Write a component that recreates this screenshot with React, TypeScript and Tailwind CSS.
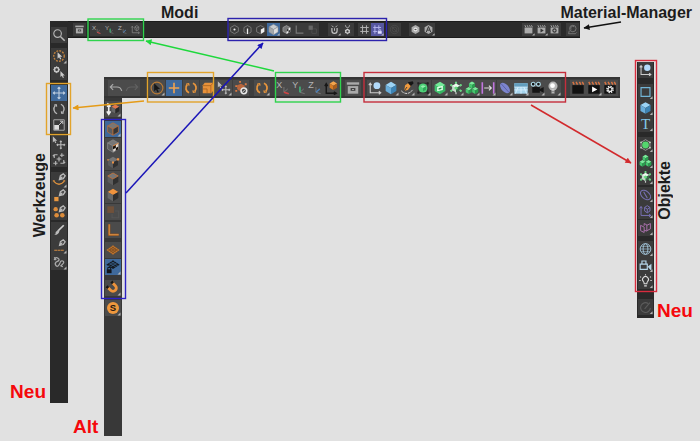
import type { ReactNode } from "react";

type CubeProps = { x?: number; y?: number; r?: number; top: string; left: string; right: string; edge?: string };

function Cube({ x = 8, y = 8, r = 6, top, left, right, edge = "none" }: CubeProps) {
  const w = r * 0.87;
  const h = r / 2;
  return (
    <g stroke={edge} strokeWidth="0.8" strokeLinejoin="round">
      <path fill={top} d={`M${x} ${y - r}L${x + w} ${y - h}L${x} ${y}L${x - w} ${y - h}Z`} />
      <path fill={left} d={`M${x - w} ${y - h}L${x} ${y}V${y + r}L${x - w} ${y + h}Z`} />
      <path fill={right} d={`M${x + w} ${y - h}L${x} ${y}V${y + r}L${x + w} ${y + h}Z`} />
    </g>
  );
}

function AxisIcon({ letter, color }: { letter: string; color: string }) {
  return (
    <g>
      <text x="1" y="8.500" fontSize="9.500" fontFamily="Liberation Sans, Arial, sans-serif" fill="#b4b4b4">
        {letter}
      </text>
      <path d="M9 7v5.500l5 1.500M9 12.500l4-3.500" stroke="#777" fill="none" />
      <path d={letter === "X" ? "M9 12.500l5 1.500" : letter === "Y" ? "M9 6.500v6" : "M9 12.500l4-3.500"} stroke={color} strokeWidth="1.500" fill="none" />
    </g>
  );
}

function Gear({ x, y, r, color, hole }: { x: number; y: number; r: number; color: string; hole: string }) {
  return (
    <g>
      <circle cx={x} cy={y} r={r} fill="none" stroke={color} strokeWidth="1.600" strokeDasharray="1.500 1" />
      <circle cx={x} cy={y} r={r * 0.65} fill={hole} stroke={color} strokeWidth="1.200" />
    </g>
  );
}

function Clapper({ body, marks, sign }: { body: string; marks: string; sign?: ReactNode }) {
  return (
    <g>
      <rect x="2" y="5" width="12" height="9" fill={body} />
      <path d="M2.500 1.500l1.500 3M6 1.500l1.500 3M9.500 1.500l1.500 3M12.500 1.500l1.500 3" stroke={marks} strokeWidth="1.500" />
      {sign}
    </g>
  );
}

const cursor = "M0 0v8.500l2-1.800 1.500 3 1.400-.7-1.500-2.900h2.800z";
const moveCross = "M8 2v12M2 8h12M6.500 3.500L8 2l1.500 1.500M6.500 12.500L8 14l1.500-1.500M3.500 6.500L2 8l1.500 1.500M12.500 6.500L14 8l-1.500 1.500";
const nib = "M8.500 7.500l1-4 3-2 2 2-2 3zM8.500 7.500l3-3";
const rotateArcs = "M6 13a5.300 5.300 0 0 1-2-8.500M10 3a5.300 5.300 0 0 1 2 8.500";
const gridLines = "M5 1.500v13M11 1.500v13M1.500 5h13M1.500 11h13";

const icons: Record<string, ReactNode> = {
  search: (
    <g fill="none" stroke="#b5b5b5">
      <circle cx="6.500" cy="6.500" r="4" strokeWidth="1.200" />
      <path d="M9.500 9.500l4.500 4.500" strokeWidth="1.600" />
    </g>
  ),
  archive: (
    <g fill="#aaa">
      <rect x="1.500" y="2" width="13" height="2.500" />
      <path d="M2.500 6h11v8h-11z" />
      <path d="M5.500 8h5v3h-5z" fill="#444" />
      <path d="M7 9h2v1H7z" />
    </g>
  ),
  x: <AxisIcon letter="X" color="#d24141" />,
  y: <AxisIcon letter="Y" color="#35ba78" />,
  z: <AxisIcon letter="Z" color="#467ebb" />,
  coordGray: (
    <g fill="none" stroke="#858585" strokeWidth="1.200">
      <path d="M3 3v10h11M1.500 5L3 3l1.500 2M12 11.500l2 1.500-2 1.500" />
      <path d="M7 4l3-2 3 2v4l-3 2-3-2zM7 4l3 2 3-2M10 6v4" />
    </g>
  ),
  points: (
    <g>
      <path d="M8 1.500l6 3.500v6l-6 3.500L2 11V5z" fill="none" stroke="#858585" strokeWidth="1.200" />
      <circle cx="8" cy="8" r="1.600" fill="#eee" />
    </g>
  ),
  edges: (
    <g>
      <path d="M6 14L2.500 12V5L8 2l5.500 3v7L10 14" fill="none" stroke="#858585" strokeWidth="1.200" />
      <path d="M8 6.500v8.500" stroke="#eee" strokeWidth="2" />
    </g>
  ),
  polys: (
    <g>
      <path d="M8 14.500l-6-3V5l6-3 5 2.500" fill="none" stroke="#858585" strokeWidth="1.200" />
      <path d="M8.500 8L14 5v6.500l-5.500 3.500z" fill="#eee" />
    </g>
  ),
  model: <Cube r={8} top="#c9cdd0" left="#a5a8aa" right="#dcdcdc" edge="#8b8f92" />,
  texture: (
    <g>
      <path d="M8 14l-5.500-3V5L8 2l5.500 3v1.500" fill="#777" stroke="#aaa" />
      <path d="M8 8l6-3v7l-6 3z" fill="#eee" />
      <path d="M8 8l3-1.500V10l-3 1.500zM11 10l3-1.500V12l-3 1.500z" fill="#333" />
    </g>
  ),
  angle: <path d="M3 2v11.500h11" fill="none" stroke="#777" strokeWidth="1.800" />,
  squares: (
    <g>
      <path d="M9 7h5v7H7V9" fill="#3b3b3b" stroke="#555" />
      <path d="M2 2h6.500v6.500H2z" fill="#666" />
    </g>
  ),
  snap: (
    <g fill="none" stroke="#c4c4c4">
      <path d="M4 5.500V10a4 4 0 0 0 8 0V5.500" strokeWidth="1.800" />
      <path d="M4 2l2.500 2.500M12 2L9.500 4.500M8 6v4" strokeWidth="1.400" />
    </g>
  ),
  snapGear: (
    <g>
      <path d="M5 1v1.500a3 2.500 0 0 0 6 0V1" fill="none" stroke="#aaa" strokeWidth="1.300" />
      <circle cx="8" cy="11" r="2.700" fill="none" stroke="#ddd" strokeWidth="1.800" />
      <path d="M8 6.700v1.500M8 13.800v1.500M4 9l1.500.800M10.500 12.200L12 13M4 13l1.500-.800M10.500 9.800L12 9" stroke="#ddd" strokeWidth="1.300" />
    </g>
  ),
  grid: <path d={gridLines} stroke="#b5b5b5" strokeWidth="1.500" />,
  gridLock: (
    <g>
      <path d="M4 1.500v13M10 1.500v6M1.500 5h12M1.500 11h6" stroke="#b5b5ed" strokeWidth="1.500" />
      <path d="M8.500 10.500h6v4h-6z" fill="#dedeff" />
      <path d="M10 10.500V8.500h3v2" fill="none" stroke="#dedeff" />
    </g>
  ),
  target: (
    <g fill="none" stroke="#515151">
      <circle cx="8" cy="8" r="6.500" />
      <circle cx="8" cy="8" r="3.500" />
      <path d="M4 4l8 8" />
    </g>
  ),
  cog: (
    <g>
      <path d="M8 1l6 3.500v7L8 15l-6-3.500v-7z" fill="#aaa" />
      <circle cx="8" cy="8" r="3" fill="#eee" />
      <path d="M6.500 7h3v2h-3z" fill="#555" />
    </g>
  ),
  auto: (
    <g>
      <path d="M8 1l6 3.500v7L8 15l-6-3.500v-7z" fill="#aaa" />
      <path d="M4.500 12L8 3.500 11.500 12M6 9h4" fill="none" stroke="#333" strokeWidth="1.500" />
    </g>
  ),
  clap: <Clapper body="#aaa" marks="#aaa" />,
  clapPlay: <Clapper body="#aaa" marks="#aaa" sign={<path d="M6.500 6.500v6l5-3z" fill="#333" />} />,
  clapGear: <Clapper body="#aaa" marks="#aaa" sign={<circle cx="8" cy="9.500" r="2.500" fill="none" stroke="#333" strokeWidth="1.700" />} />,
  material: (
    <g fill="none" stroke="#8a8a8a" strokeWidth="1.100">
      <circle cx="8.500" cy="6.500" r="5" />
      <path d="M6 8a3 3 0 0 1 4.500-4M3 10l-1 4.500h10.500l2-2" />
    </g>
  ),
  select: (
    <g>
      <circle cx="8" cy="8" r="5.500" fill="none" stroke="#c3833e" strokeWidth="1.400" strokeDasharray="2 1.200" />
      <path d={cursor} transform="translate(6.500 4) scale(.8)" fill="#ccc" />
    </g>
  ),
  gearCursor: (
    <g>
      <circle cx="5.500" cy="5.500" r="2.200" fill="none" stroke="#c4c4c4" strokeWidth="1.600" />
      <path d="M5.500 2v1.200M5.500 8v1.200M2 5.500h1M8 5.500h1M3 3l1 1M7 7l1 1M3 8l1-1M7 4l1-1" stroke="#c4c4c4" />
      <path d={cursor} transform="translate(9.500 7) scale(.75)" fill="#c9c9c9" />
    </g>
  ),
  move: <path d={moveCross} fill="none" stroke="#c2d0e0" strokeWidth="1.100" />,
  rotate: (
    <g fill="none" stroke="#b9b9b9" strokeWidth="1.400">
      <path d={rotateArcs} />
      <path d="M3 4l2-.500.500 2M13 12l-2 .500-.500-2" />
    </g>
  ),
  scale: (
    <g>
      <path d="M2.500 2.500h11v11h-11z" fill="none" stroke="#aaa" />
      <path d="M3 8h5v5H3z" fill="#ddd" />
      <path d="M8 8l4-4M9 4h3v3" fill="none" stroke="#ccc" />
    </g>
  ),
  cursorMove: (
    <g>
      <path d={cursor} transform="translate(1.500 1) scale(.75)" fill="#bbb" />
      <path d={moveCross} transform="translate(4.500 4.500) scale(.68)" fill="none" stroke="#bbb" strokeWidth="1.600" />
    </g>
  ),
  multiMove: (
    <g fill="none" stroke="#b5b5b5" strokeWidth="1.200">
      <path d="M8 5.500v5M5.500 8h5" />
      <path d="M3 7V3.500h3.500M1.500 5L3 3.500M13 9v3.500H9.500M14.500 11L13 12.500" />
      <path d="M11 2v4M9 4h4.500M4.500 10v4.500M2 12.500h4.500" />
    </g>
  ),
  penCurve: (
    <g fill="none" strokeWidth="1.400">
      <path d={nib} stroke="#b9b9b9" />
      <path d="M2.500 9.500q5.500 6 11 0" stroke="#df923e" />
      <path d="M1.500 9h2M12.500 9h2" stroke="#df923e" />
    </g>
  ),
  penSquare: (
    <g>
      <path d={nib} fill="none" stroke="#b9b9b9" strokeWidth="1.400" />
      <path d="M3 9h4.500v4.500H3z" fill="#e89740" />
    </g>
  ),
  penDots: (
    <g>
      <path d={nib} fill="none" stroke="#b9b9b9" strokeWidth="1.400" />
      <g fill="#dc8c3b">
        <circle cx="4.500" cy="5" r="2.300" />
        <circle cx="5.500" cy="11.500" r="2.400" />
        <circle cx="11.500" cy="11.500" r="2.400" />
      </g>
    </g>
  ),
  brush: (
    <g>
      <path d="M13 3L7 9" stroke="#ccc" strokeWidth="1.800" />
      <path d="M7 8l1.500 1.500Q7 13.500 3 13q2-1 1.500-3z" fill="#bbb" />
    </g>
  ),
  penLine: (
    <g>
      <path d={nib} fill="none" stroke="#b9b9b9" strokeWidth="1.300" />
      <path d="M3 12.500h10" stroke="#d58c40" strokeWidth="1.200" strokeDasharray="3 .5" />
    </g>
  ),
  squiggle: <path d="M3 6q1-4 4-2t-2 4q-2 2 0 4t4-3q1-3 3-2t0 3-2 2 2 1M3 3l2 3" fill="none" stroke="#aaa" strokeWidth="1.300" />,
  undo: <path d="M5 4L2 7l3 3M2 7h7q4 0 5 4" fill="none" stroke="#aaa" strokeWidth="1.200" />,
  redo: <path d="M11 4l3 3-3 3M14 7H7q-4 0-5 4" fill="none" stroke="#626262" strokeWidth="1.200" />,
  selectOld: (
    <g>
      <circle cx="8" cy="8" r="6.200" fill="none" stroke="#b97b36" strokeWidth="1.200" />
      <path d={cursor} transform="translate(5 3)" fill="#161616" />
    </g>
  ),
  moveOld: <path d="M8 2.500v11M2.500 8h11" stroke="#f0a24d" strokeWidth="1.700" />,
  rotateOld: (
    <g fill="none" stroke="#e8953c" strokeWidth="1.900">
      <path d={rotateArcs} />
      <path d="M3 4l2.500-.500.500 2M13 12l-2.500.500-.500-2" strokeWidth="1.300" />
    </g>
  ),
  scaleOld: (
    <g>
      <path d="M2.500 5l2-2.500h9V11l-2 2.500h-9z" fill="#e8913a" />
      <path d="M2.500 5.500h8.500v8M11 5.500l2.500-3M2.500 9H7v4.500" fill="none" stroke="#a35f1f" strokeWidth=".8" />
    </g>
  ),
  objGear: (
    <g>
      <path d="M4 5l4-1.500 4 2-1 4-5 1.500-2-2z" fill="#b9663d" />
      <path d="M2 6h2M6 1.500h2M12 4h2M2 11h2" stroke="#da7942" strokeWidth="2" />
      <circle cx="11" cy="11" r="3" fill="#444" stroke="#e8e8e8" strokeWidth="1.700" />
      <path d="M9.500 12.500l3-3" stroke="#e8e8e8" />
    </g>
  ),
  axisCube: (
    <g>
      <path d="M3 4v9.500h10M1.500 6L3 3.500 4.500 6M11 12l2.500 1.500L11 15" fill="none" stroke="#171717" strokeWidth="1.500" />
      <Cube x={10.500} y={5.500} r={4.500} top="#f3a44c" left="#d77c24" right="#a95d1a" />
    </g>
  ),
  axisBall: (
    <g>
      <path d="M3 3v10h11M1.500 5L3 3l1.500 2M12 11.500l2 1.500-2 1.500" fill="none" stroke="#ccc" strokeWidth="1.200" />
      <circle cx="10" cy="5.500" r="3.600" fill="#b3dafa" />
    </g>
  ),
  blueCube: <Cube r={6.500} top="#9bd3f5" left="#6aaedb" right="#3d84b5" />,
  penOrange: (
    <g>
      <path d="M9 2l5-1 1 2-4 4z" fill="#151515" />
      <path d="M5 11l1-6 3-2 3 3-3 4z" fill="#f09a3e" />
      <path d="M5 11l3-4" stroke="#333" />
      <path d="M2 11q6 6 12-1" fill="none" stroke="#ddd" strokeDasharray="3 1" />
    </g>
  ),
  subdiv: (
    <g>
      <path d="M3 3h10v10H3z" fill="none" stroke="#282828" />
      <circle cx="8" cy="8" r="4.700" fill="#4ed078" />
      <path d="M5.500 6.500L8 5l3 1.500L8 8z" fill="#95eeae" />
      <path d="M8 8l3-1.500V10l-3 1.500z" fill="#2fa85a" />
      <path d="M2 2h2v2H2zM12 2h2v2h-2zM2 12h2v2H2zM12 12h2v2h-2z" fill="#222" />
    </g>
  ),
  extrude: (
    <g>
      <Cube r={6.500} top="#72ea98" left="#41c570" right="#35b562" />
      <path d="M5 7l6-1.500v4.500l-6 1.500z" fill="#dfffe7" />
      <path d="M6.500 8.200l3-.8v1.600l-3 .8z" fill="#278d4a" />
    </g>
  ),
  fracture: (
    <g>
      <path d="M8 1.500v13M2.500 5l11 6M13.500 5l-11 6" stroke="#c9c9c9" strokeWidth="1.300" />
      <Cube r={4.700} top="#eef9f0" left="#c5ddcb" right="#396849" />
      <circle cx="8" cy="8" r="1.700" fill="#63da7b" />
      <g fill="#66d981">
        <circle cx="8" cy="2.500" r="1.200" />
        <circle cx="3" cy="11" r="1.200" />
        <circle cx="13" cy="11" r="1.200" />
        <circle cx="3" cy="5" r="1.200" />
        <circle cx="13" cy="5" r="1.200" />
      </g>
    </g>
  ),
  cloner: (
    <g>
      <Cube x={8} y={4.800} r={3.700} top="#7aeb9b" left="#44c76e" right="#299e4e" />
      <Cube x={4.600} y={10.700} r={3.700} top="#7aeb9b" left="#44c76e" right="#299e4e" />
      <Cube x={11.400} y={10.700} r={3.700} top="#7aeb9b" left="#44c76e" right="#299e4e" />
    </g>
  ),
  field: (
    <g>
      <path d="M2 2v12M14 2v12" stroke="#c176df" strokeWidth="1.700" />
      <path d="M4 8h7M9 5.500L11.500 8 9 10.500" fill="none" stroke="#ddd" strokeWidth="1.200" />
    </g>
  ),
  bean: (
    <g transform="rotate(48 8 8)">
      <ellipse cx="8" cy="8" rx="6.500" ry="3.800" fill="#7c85ce" />
      <path d="M2 8h12" stroke="#545aa0" strokeWidth=".8" />
    </g>
  ),
  floor: (
    <g>
      <path d="M1 3h14v11H1z" fill="#a6d5ed" />
      <path d="M1 3h14v4H1z" fill="#629dbd" />
      <path d="M1 7h14M1 10h14M5 7l-3 7M8 7v7M11 7l3 7" stroke="#dff2ff" strokeWidth=".8" />
    </g>
  ),
  cameraOld: (
    <g fill="#151515">
      <path d="M3 7h8v6H3zM11 9l4-2v6l-4-2z" />
      <circle cx="4" cy="4" r="2" stroke="#b1ddec" strokeWidth="1.200" />
      <circle cx="9.500" cy="4" r="2" stroke="#b1ddec" strokeWidth="1.200" />
    </g>
  ),
  bulbOld: (
    <g>
      <circle cx="8" cy="6" r="4.800" fill="#b5b5b5" />
      <circle cx="7.500" cy="5.500" r="2.500" fill="#fff" />
      <path d="M6.500 9h3v5h-3z" fill="#ccc" />
      <path d="M6.500 11.500h3M6.500 13.500h3" stroke="#555" strokeWidth=".7" />
    </g>
  ),
  clapOld: <Clapper body="#121212" marks="#da7442" />,
  clapPlayOld: <Clapper body="#121212" marks="#da7442" sign={<path d="M6 6.500v6l5.500-3z" fill="#fff" />} />,
  clapGearOld: <Clapper body="#121212" marks="#da7442" sign={<Gear x={8} y={9.500} r={3.200} color="#eee" hole="#151515" />} />,
  editable: (
    <g>
      <path d="M3.500 6v7M1.500 10.500l2 3 2-3M1.500 5h4M2 2l3 3" fill="none" stroke="#eee" strokeWidth="1.700" />
      <Cube x={10.500} y={8} r={4.700} top="#e2774c" left="#686868" right="#292929" />
    </g>
  ),
  modelOld: <Cube r={6.500} top="#777" left="#5c5c5c" right="#353535" edge="#b66e3b" />,
  textureOld: (
    <g>
      <Cube r={6.500} top="#777" left="#5c5c5c" right="#e8e0d8" edge="#888" />
      <path d="M8 8l3-1.500V10l-3 1.500zM11 10l2.500-1.500v3L11 13z" fill="#17110c" />
      <path d="M8 8l6-3" stroke="#e88c42" />
    </g>
  ),
  pointsOld: (
    <g>
      <Cube y={8.500} r={6} top="#767676" left="#5d5d5d" right="#303030" />
      <path d="M7 7.500h2v2H7zM12 4h2.500v2.500H12zM2 5h1.500v1.500H2z" fill="#f29444" />
    </g>
  ),
  edgesOld: (
    <g>
      <Cube r={6.500} top="#767676" left="#5d5d5d" right="#303030" />
      <path d="M2.500 4.800L8 1.700l5.500 3.100L8 8z" fill="none" stroke="#c0723a" strokeWidth=".9" />
    </g>
  ),
  polysOld: <Cube r={6.500} top="#f0933d" left="#686868" right="#303030" />,
  squaresOld: (
    <g>
      <path d="M2 2h7v7H2z" fill="#70513a" />
      <path d="M10 7h4v7H7v-4" fill="none" stroke="#555" strokeWidth="1.200" />
    </g>
  ),
  angleOld: (
    <g fill="none">
      <path d="M4 2v11h10" stroke="#8f5424" strokeWidth="2.600" />
      <path d="M4 2v11h10" stroke="#e99a48" strokeWidth="1" />
    </g>
  ),
  plane: (
    <g>
      <path d="M8 3l7 5-7 5-7-5z" fill="#c0762f" />
      <path d="M6.200 4.300l7 5M4.500 5.500l7 5M2.800 6.700l7 5M9.800 4.300l-7 5M11.500 5.500l-7 5M13.200 6.700l-7 5" stroke="#6d421e" strokeWidth=".7" />
    </g>
  ),
  planeLock: (
    <g>
      <path d="M8 1l7 4.500-7 4.500-7-4.500z" fill="#14191f" />
      <path d="M6 2.300l7 4.500M4 3.600l7 4.500M10 2.300L3 6.800M12 3.600L5 8.100" stroke="#3c6795" strokeWidth=".7" />
      <path d="M1.500 10.500h5v4h-5z" fill="#101318" />
      <path d="M2.500 11V8.500h3V11" fill="none" stroke="#101318" />
    </g>
  ),
  magnet: (
    <g transform="rotate(-45 8 8)" fill="none" strokeWidth="3">
      <path d="M4.500 3v5a3.500 3.500 0 0 0 7 0V3" stroke="#ed933b" />
      <path d="M4.500 2v2.500M11.500 2v2.500" stroke="#161616" />
    </g>
  ),
  solo: (
    <g>
      <circle cx="8" cy="8" r="6.300" fill="#ef983d" />
      <text x="8" y="11.500" textAnchor="middle" fontSize="10" fontWeight="bold" fontFamily="Liberation Sans, Arial, sans-serif" fill="#1d1612">
        S
      </text>
    </g>
  ),
  square: <path d="M3 3h10v10H3z" fill="none" stroke="#72b5d6" strokeWidth="1.300" />,
  type: (
    <text x="8" y="13.500" textAnchor="middle" fontSize="17" fontFamily="Liberation Serif, Times New Roman, serif" fill="#83c8e8">
      T
    </text>
  ),
  subdivNew: (
    <g>
      <path d="M8 2l5 3v6l-5 3-5-3V5z" fill="none" stroke="#aaa" strokeWidth=".9" />
      <circle cx="8" cy="8" r="3.800" fill="#54d66e" />
      <g fill="#c5d9c6">
        <circle cx="3" cy="5" r="1" />
        <circle cx="13" cy="5" r="1" />
        <circle cx="3" cy="11" r="1" />
        <circle cx="13" cy="11" r="1" />
      </g>
    </g>
  ),
  ring: (
    <g transform="rotate(40 8 8)" fill="none" stroke="#7871b4" strokeWidth="1.200">
      <ellipse cx="8" cy="8" rx="6.500" ry="4.200" />
      <path d="M4 6.500l8 3" />
    </g>
  ),
  coordPurple: (
    <g fill="none" stroke="#7871b4" strokeWidth="1.100">
      <path d="M3 3v10h11M1.500 5L3 3l1.500 2M12 11.500l2 1.500-2 1.500M7 4l3-2 3 2v4l-3 2-3-2zM7 4l3 2 3-2M10 6v4" />
    </g>
  ),
  symmetry: <path d="M2.500 5l4 2v6l-4-2zM6.500 5.500V3l3 1.500v7l-3-1M9.500 5l4-2v6l-4 2" fill="none" stroke="#aa71ac" strokeWidth="1.100" />,
  globe: (
    <g fill="none" stroke="#a5c8dd">
      <circle cx="8" cy="8" r="6" />
      <ellipse cx="8" cy="8" rx="2.700" ry="6" />
      <path d="M2 8h12M3 5h10M3 11h10" strokeWidth=".7" />
    </g>
  ),
  camera: (
    <g fill="none" stroke="#b5d6e9" strokeWidth="1.300">
      <path d="M2 7h8v6H2zM4 7V3.500h4.500V7" />
      <path d="M11.500 10L14 8v5z" fill="#b5d6e9" />
    </g>
  ),
  bulb: (
    <g fill="none" stroke="#ddd" strokeWidth="1.200">
      <path d="M6.500 11q0-1.500-1-2.500a3.300 3.300 0 1 1 5 0q-1 1-1 2.500zM6.500 13.500h3" />
      <path d="M8 .500v1M2 3l1 1M14 3l-1 1M1 7.500h1.500M13.500 7.500H15" />
    </g>
  ),
  penRing: (
    <g fill="none" stroke="#5c5c5c" strokeWidth="1.200">
      <path d="M11 4a5.500 5.500 0 1 0 2.500 5M7 10l6-7" />
    </g>
  ),
};

type Size = "top" | "std" | "narrow";
const sizeClass: Record<Size, string> = {
  top: "h-[13px] w-[13px]",
  std: "h-4 w-4",
  narrow: "h-4 w-[15px]",
};

// Icons in the slim top bar sit in a wider margin than the palette icons.
const inset: Record<Size, string> = {
  top: "translate(1.6 1.6) scale(.8)",
  std: "translate(.4 .4) scale(.95)",
  narrow: "translate(.4 .4) scale(.95)",
};

// A trailing "+" marks a tool with a fly-out palette, "*" an active one.
function Tool({ spec, size, face }: { spec: string; size: Size; face: string }) {
  const name = spec.replace(/[+*]/g, "");
  const active = spec.includes("*");
  const tone = !active ? face : name === "gridLock" ? "bg-[#5657a0]" : "bg-[#3f699b]";
  return (
    <button type="button" aria-label={name} className={`block shrink-0 ${sizeClass[size]} ${tone}`}>
      <svg viewBox="0 0 16 16" className="block h-full w-full" aria-hidden="true">
        <g transform={inset[size]}>{icons[name]}</g>
        {spec.includes("+") && <path d="M15.500 12.500v3h-3z" fill="#b4b4b4" />}
      </svg>
    </button>
  );
}

type GroupProps = { tools: string; size?: Size; face?: string; className?: string };

function Group({ tools, size = "std", face = "bg-[#3b3b3b]", className = "" }: GroupProps) {
  return (
    <div className={`flex shrink-0 ${className}`}>
      {tools.split(" ").map((spec) => (
        <Tool key={spec} spec={spec} size={size} face={face} />
      ))}
    </div>
  );
}

const oldFace = "bg-[#4b4b4b]";
const label = "text-base leading-4 font-bold text-[#1c1c1c]";
const version = "text-[19px] leading-5 font-bold text-[#f5080c]";

export default function App() {
  return (
    <main className="relative grid min-h-screen w-full grid-cols-[50px_18px_36px_1fr_17px_17px_46px] grid-rows-[21px_17px_1fr] overflow-hidden bg-[#e1e1e1] font-['Liberation_Sans',Arial,sans-serif]">
      <h2 className={`col-start-4 row-start-1 pt-[5px] pl-[57px] ${label}`}>Modi</h2>
      <h2 className={`col-span-4 col-start-4 row-start-1 justify-self-end pt-[5px] pr-2 ${label}`}>Material-Manager</h2>

      <div className="col-start-1 row-span-2 row-start-2 flex flex-col items-end justify-between pt-[132px] pr-[2px] pb-[39px]">
        <h2 className={`rotate-180 [writing-mode:vertical-rl] ${label}`}>Werkzeuge</h2>
        <p className={`pr-[2px] ${version}`}>Neu</p>
      </div>

      <nav aria-label="Werkzeuge" className="col-start-2 row-span-2 row-start-2 mb-[38px] flex flex-col items-center bg-[#292929] pt-1.5">
        <Group tools="search" className="flex-col" />
        <Group tools="select+ gearCursor" className="mt-[5px] flex-col" />
        <Group tools="move* rotate scale" className="mt-[5px] flex-col" />
        <Group tools="cursorMove multiMove" className="mt-0.5 flex-col" />
        <Group tools="penCurve+ penSquare penDots" className="mt-[5px] flex-col" />
        <Group tools="brush penLine+ squiggle+" className="mt-0.5 flex-col" />
      </nav>

      <nav aria-label="Modi" className="col-span-2 col-start-3 row-start-2 mr-10 flex items-center border-y border-[#1b1b1b] bg-[#2a2a2a] pr-[1px] pl-[5px]">
        <Group size="top" tools="archive" />
        <Group size="top" tools="x y z coordGray" className="ml-1" />
        <Group size="top" tools="points edges polys model+* texture angle squares" className="ml-[86px]" />
        <Group size="top" tools="snap+ snapGear" className="ml-[9px]" />
        <Group size="top" tools="grid gridLock+*" className="ml-1" />
        <Group size="top" tools="target" className="ml-1" />
        <Group size="top" tools="cog auto+" className="ml-2" />
        <Group size="top" tools="clap+ clapPlay+ clapGear" className="ml-auto" />
        <Group size="top" tools="material" className="ml-[5px]" />
      </nav>

      <p className={`col-start-3 row-start-3 self-end pb-1 pl-[5px] ${version}`}>Alt</p>

      <section aria-label="Alt" className="col-start-4 row-start-3 mt-[39px] mb-[5px] flex flex-col">
        <nav className="flex h-[21px] shrink-0 items-center border-y-2 border-[#343434] bg-[#3e3e3e] pr-0.5 pl-1">
          <Group face={oldFace} tools="undo redo" />
          <Group face={oldFace} tools="selectOld+ moveOld* rotateOld scaleOld" className="ml-[9px] gap-px" />
          <Group face={oldFace} tools="cursorMove+ objGear" className="gap-px" />
          <Group face={oldFace} tools="rotateOld+" className="ml-[5px]" />
          <Group face={oldFace} tools="x y z axisCube" className="ml-[5px]" />
          <Group face={oldFace} tools="archive" className="ml-1.5" />
          <Group face={oldFace} tools="axisBall blueCube+ penOrange+ subdiv+" className="ml-1.5" />
          <Group face={oldFace} tools="extrude+ fracture+ cloner+ field+" className="ml-px" />
          <Group face={oldFace} tools="bean+ floor+ cameraOld+ bulbOld+" className="ml-px" />
          <Group face={oldFace} tools="clapOld clapPlayOld+ clapGearOld" className="ml-auto" />
        </nav>
        <nav className="flex w-[18px] flex-1 flex-col items-center bg-[#383838] pt-[3px]">
          <Group face={oldFace} tools="editable+" className="flex-col" />
          <Group face={oldFace} tools="modelOld+* textureOld" className="mt-1 flex-col gap-px" />
          <Group face={oldFace} tools="pointsOld edgesOld" className="flex-col gap-px" />
          <Group face={oldFace} tools="polysOld squaresOld" className="flex-col gap-px" />
          <Group face={oldFace} tools="angleOld" className="mt-0.5 flex-col" />
          <Group face={oldFace} tools="plane planeLock+*" className="mt-1 flex-col gap-px" />
          <Group face={oldFace} tools="magnet+" className="mt-[5px] flex-col" />
          <Group face={oldFace} tools="solo+" className="mt-1 flex-col" />
        </nav>
      </section>

      <nav aria-label="Objekte" className="col-start-6 row-start-3 mt-6 flex flex-col items-center self-start bg-[#292929] pb-[3px]">
        <Group size="narrow" tools="axisBall" className="flex-col" />
        <Group size="narrow" tools="square+ blueCube+ type+" className="mt-1.5 flex-col" />
        <Group size="narrow" tools="subdivNew+ cloner+ fracture+" className="mt-[5px] flex-col" />
        <Group size="narrow" tools="ring+ coordPurple+" className="mt-0.5 flex-col" />
        <Group size="narrow" tools="symmetry+" className="mt-px flex-col" />
        <Group size="narrow" tools="globe+ camera+ bulb+" className="mt-[5px] flex-col" />
        <Group size="narrow" tools="penRing+" className="mt-2.5 flex-col" />
      </nav>

      <div className="col-start-7 row-start-3 flex flex-col items-start gap-[81px] pt-[123px] pl-[3px]">
        <h2 className={`rotate-180 [writing-mode:vertical-rl] ${label}`}>Objekte</h2>
        <p className={version}>Neu</p>
      </div>

      <svg viewBox="0 0 700 441" aria-hidden="true" className="pointer-events-none absolute top-0 left-0 h-[441px] w-[700px]">
        <defs>
          <marker id="tip" viewBox="0 0 6 6" refX="5.500" refY="3" markerWidth="5" markerHeight="4" orient="auto">
            <path d="M0 0l6 3-6 3z" fill="context-stroke" />
          </marker>
        </defs>
        <g fill="none" strokeWidth="1.400">
          <rect x="88" y="19" width="55.500" height="21.500" stroke="#2fd34d" />
          <rect x="228" y="18.500" width="158.500" height="22" stroke="#2c22ad" />
          <rect x="147.500" y="72.500" width="66" height="29.500" stroke="#e2a32b" />
          <rect x="275.500" y="72.500" width="65" height="29.500" stroke="#2fd34d" />
          <rect x="364" y="72.500" width="201.500" height="29.500" stroke="#c52e3c" />
          <rect x="46.500" y="83.500" width="24" height="51" stroke="#e2a32b" />
          <rect x="101.500" y="119.500" width="24" height="179" stroke="#2c22c4" />
          <rect x="635.500" y="60.500" width="21" height="231" stroke="#d82c3e" />
        </g>
        <g fill="none" strokeWidth="1.500">
          <path d="M274 71L146 41" stroke="#1ed83c" markerEnd="url(#tip)" />
          <path d="M126 193L263 43" stroke="#1a15b8" markerEnd="url(#tip)" />
          <path d="M144 101L73 108" stroke="#e59b17" markerEnd="url(#tip)" />
          <path d="M531 105L631 163" stroke="#d22a2d" markerEnd="url(#tip)" />
          <path d="M621 22L584 28" stroke="#111" markerEnd="url(#tip)" />
        </g>
      </svg>
    </main>
  );
}
